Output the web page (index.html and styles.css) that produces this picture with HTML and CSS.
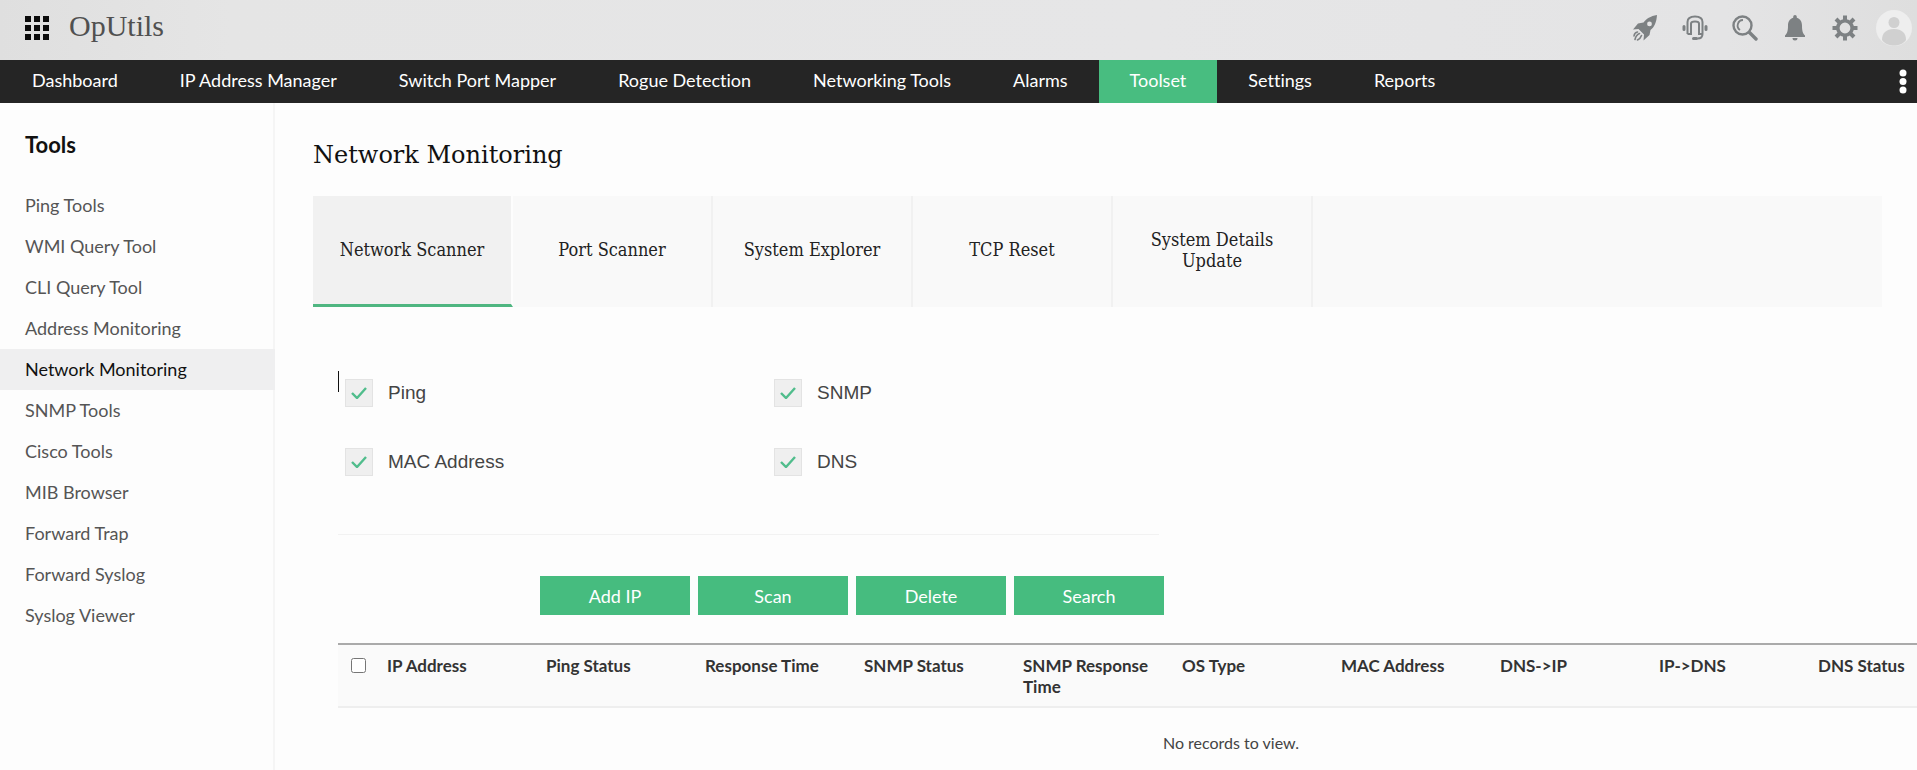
FILE: index.html
```html
<!DOCTYPE html>
<html lang="en">
<head>
<meta charset="utf-8">
<meta name="viewport" content="width=device-width, initial-scale=1">
<title>OpUtils - Network Monitoring</title>
<link rel="stylesheet" href="styles.css">
</head>
<body>
<header class="topbar">
  <button class="icon-btn apps" type="button" aria-label="Applications">
    <svg width="24" height="24" viewBox="0 0 24 24" fill="#0b0b0b"><path d="M0 0h6v6H0zM9 0h6v6H9zM18 0h6v6h-6zM0 9h6v6H0zM9 9h6v6H9zM18 9h6v6h-6zM0 18h6v6H0zM9 18h6v6H9zM18 18h6v6h-6z"/></svg>
  </button>
  <span class="brand">OpUtils</span>
  <div class="actions">
    <button class="icon-btn" type="button" aria-label="Quick start">
      <svg width="26" height="26" viewBox="0 0 26 26"><path fill="#7d8183" fill-rule="evenodd" d="M25 0C18.500 1 14 4 11.500 7.500L6 8.500 1 14.500l5.500-.5 5.500 5.500-.5 6 6-5.500 1-5C22.500 12 24.500 7 25 0zM17.500 6.500a2.400 2.400 0 1 1 0 4.800 2.400 2.400 0 0 1 0-4.800z"/><path fill="none" stroke="#7d8183" stroke-width="1.600" stroke-linecap="round" d="M5.500 17Q2.500 17.500 2 21M7.500 18.500Q4 20 3 24.500M9.500 20.500Q8.500 23.500 5.500 25"/></svg>
    </button>
    <button class="icon-btn" type="button" aria-label="Support">
      <svg width="26" height="26" viewBox="0 0 26 26" fill="none" stroke="#7d8183"><path stroke-width="2" d="M5.500 19V7C5.500 3.500 8 1.500 13 1.500S20.500 3.500 20.500 7v12M5.500 19h3.500V8.500c0-1.500 1-2 4-2s4 .5 4 2V19h3.500c0 3-1.500 4.500-5 4.500"/><path stroke-width="3" stroke-linecap="round" d="M2 11.500v3M24 11.500v3M11.500 23.500h3"/></svg>
    </button>
    <button class="icon-btn" type="button" aria-label="Search">
      <svg width="26" height="26" viewBox="0 0 26 26" fill="none" stroke="#7d8183"><circle cx="10.500" cy="10.500" r="9" stroke-width="2.400"/><path stroke-width="1.800" d="M11 5a5.500 5.500 0 0 0-3 10"/><path stroke-width="3.400" stroke-linecap="round" d="M17.500 17.500l6.500 6.500"/></svg>
    </button>
    <button class="icon-btn" type="button" aria-label="Notifications">
      <svg width="26" height="26" viewBox="0 0 26 26" fill="#7d8183"><path d="M13 0a1.800 1.800 0 0 1 1.800 1.800v1C18.500 3.800 20 7 20 10.500c0 5.500.8 8 3 10V22H3v-1.500c2.200-2 3-4.500 3-10C6 7 7.500 3.800 11.200 2.800v-1A1.800 1.800 0 0 1 13 0zM10.500 23h5a2.500 2.500 0 0 1-5 0z"/></svg>
    </button>
    <button class="icon-btn" type="button" aria-label="Settings">
      <svg width="26" height="26" viewBox="0 0 26 26" fill="none" stroke="#7d8183"><circle cx="13" cy="13" r="7.200" stroke-width="3.600"/><path stroke-width="4" d="M13 5V.5M13 21v4.500M5 13H.5M21 13h4.500M7.500 7.500L4 4M18.500 18.500L22 22M7.500 18.500L4 22M18.500 7.500L22 4"/></svg>
    </button>
    <button class="icon-btn avatar" type="button" aria-label="Account">
      <svg width="38" height="38" viewBox="0 0 38 38"><circle cx="19" cy="19" r="18" fill="#eee"/><circle cx="19" cy="13.500" r="5.500" fill="#d0d0d0"/><path fill="#d0d0d0" d="M7 31c0-7 4-11 12-11s12 4 12 11c-3 4-7 5.500-12 5.500S10 35 7 31z"/></svg>
    </button>
  </div>
</header>
<nav class="mainnav" aria-label="Main">
  <a href="#">Dashboard</a>
  <a href="#">IP Address Manager</a>
  <a href="#">Switch Port Mapper</a>
  <a href="#">Rogue Detection</a>
  <a href="#">Networking Tools</a>
  <a href="#">Alarms</a>
  <a href="#" class="active" aria-current="page">Toolset</a>
  <a href="#">Settings</a>
  <a href="#">Reports</a>
  <button class="icon-btn more" type="button" aria-label="More">
    <svg width="8" height="26" viewBox="0 0 8 26" fill="#fff"><circle cx="4" cy="4" r="3.500"/><circle cx="4" cy="12.500" r="3.500"/><circle cx="4" cy="21" r="3.500"/></svg>
  </button>
</nav>
<div class="layout">
  <aside class="sidebar">
    <h2>Tools</h2>
    <a href="#">Ping Tools</a>
    <a href="#">WMI Query Tool</a>
    <a href="#">CLI Query Tool</a>
    <a href="#">Address Monitoring</a>
    <a href="#" class="active" aria-current="page">Network Monitoring</a>
    <a href="#">SNMP Tools</a>
    <a href="#">Cisco Tools</a>
    <a href="#">MIB Browser</a>
    <a href="#">Forward Trap</a>
    <a href="#">Forward Syslog</a>
    <a href="#">Syslog Viewer</a>
  </aside>
  <main class="content">
    <h1>Network Monitoring</h1>
    <div class="tabs" role="tablist">
      <button type="button" role="tab" aria-selected="true" class="tab active">Network Scanner</button>
      <button type="button" role="tab" aria-selected="false" class="tab">Port Scanner</button>
      <button type="button" role="tab" aria-selected="false" class="tab">System Explorer</button>
      <button type="button" role="tab" aria-selected="false" class="tab">TCP Reset</button>
      <button type="button" role="tab" aria-selected="false" class="tab">System Details Update</button>
    </div>
    <div class="panel">
      <div class="options">
        <span class="caret"></span>
        <label><input type="checkbox" checked>Ping</label>
        <label><input type="checkbox" checked>SNMP</label>
        <label><input type="checkbox" checked>MAC Address</label>
        <label><input type="checkbox" checked>DNS</label>
      </div>
      <div class="buttons">
        <button type="button">Add IP</button>
        <button type="button">Scan</button>
        <button type="button">Delete</button>
        <button type="button">Search</button>
      </div>
      <div class="table-wrap">
        <table class="results">
          <thead>
            <tr>
              <th class="pick"><input type="checkbox" aria-label="Select all"></th>
              <th>IP Address</th>
              <th>Ping Status</th>
              <th>Response Time</th>
              <th>SNMP Status</th>
              <th>SNMP Response Time</th>
              <th>OS Type</th>
              <th>MAC Address</th>
              <th>DNS-&gt;IP</th>
              <th>IP-&gt;DNS</th>
              <th class="last">DNS Status</th>
            </tr>
          </thead>
          <tbody>
            <tr><td colspan="11">No records to view.</td></tr>
          </tbody>
        </table>
      </div>
    </div>
  </main>
</div>
</body>
</html>
```
FILE: styles.css
```css
* { box-sizing: border-box; }

body {
  margin: 0;
  min-height: 100vh;
  display: flex;
  flex-direction: column;
  background: #fdfdfd;
  color: #222;
  font-family: Lato, "Liberation Sans", sans-serif;
  font-size: 18px;
  font-variant-ligatures: none;
}

a { text-decoration: none; }

button {
  border: 0;
  padding: 0;
  background: none;
  font-family: inherit;
}

.icon-btn {
  display: flex;
  align-items: center;
  justify-content: center;
}

.topbar {
  display: flex;
  align-items: center;
  height: 60px;
  padding: 0 4px 4px 25px;
  background: linear-gradient(90deg, #dfdfdf, #e5e5e5 12%, #e6e6e7 60%, #e4e4e5 90%, #dedede);
}

.brand {
  margin-left: 20px;
  padding-bottom: 4px;
  color: #505050;
  font-family: "Liberation Serif", serif;
  font-size: 30px;
}

.actions {
  display: flex;
  align-items: center;
  margin-left: auto;
}

.actions .icon-btn { width: 50px; }

.actions .avatar {
  width: 38px;
  margin-left: 5px;
}

.mainnav {
  display: flex;
  height: 43px;
  padding: 0 10px 0 1px;
  background: #252525;
}

.mainnav a {
  padding: 0 31px;
  color: #fff;
  line-height: 40px;
  white-space: nowrap;
}

.mainnav .active { background: #48bd80; }

.more { margin-left: auto; }

.layout {
  display: flex;
  flex: 1;
}

.sidebar {
  flex: none;
  width: 275px;
  padding-top: 28px;
  border-right: 2px solid #f5f5f5;
}

.sidebar h2 {
  margin: 0 0 26px 25px;
  color: #111;
  font-size: 22px;
  line-height: 28px;
}

.sidebar a {
  display: block;
  margin-right: -2px;
  padding-left: 25px;
  color: #555;
  line-height: 41px;
}

.sidebar .active {
  background: #efeff0;
  color: #111;
}

.content {
  flex: 1;
  min-width: 0;
  padding: 36px 0 0 38px;
}

h1 {
  margin: 0 0 25px;
  color: #111;
  font-family: "DejaVu Serif", serif;
  font-size: 24px;
  font-weight: 400;
  line-height: 32px;
}

.tabs {
  display: flex;
  height: 111px;
  margin-right: 35px;
  background: #f9f9f9;
}

.tab {
  width: 200px;
  padding: 0 24px 4px;
  border-right: 2px solid #f1f1f1;
  color: #222;
  font-family: "DejaVu Serif Condensed", "DejaVu Serif", serif;
  font-size: 18px;
  line-height: 21px;
}

.tab.active {
  padding: 0 0 1px;
  border-right-color: #fdfdfd;
  border-bottom: 3px solid #4fb681;
  background: #f1f1f1 padding-box;
}

.panel { padding-left: 25px; }

.options {
  position: relative;
  display: grid;
  grid-template-columns: 429px 1fr;
  row-gap: 41px;
  width: 821px;
  padding: 72px 0 58px 7px;
  border-bottom: 1px solid #f2f2f2;
}

.options label {
  display: flex;
  align-items: center;
  gap: 15px;
  color: #444;
  font-family: "Liberation Sans", Arial, sans-serif;
  font-size: 19px;
  line-height: 28px;
}

.options input {
  appearance: none;
  width: 28px;
  height: 28px;
  margin: 0;
  border: 1px solid #e3e3e3;
  background: #efefef url("data:image/svg+xml,%3Csvg xmlns='http://www.w3.org/2000/svg' viewBox='0 0 16 12'%3E%3Cpath d='M1 6l5 5L15 1' fill='none' stroke='%2350bd8c' stroke-width='2.400'/%3E%3C/svg%3E") center / 16px 12px no-repeat;
}

.caret {
  position: absolute;
  top: 64px;
  left: 0;
  width: 1px;
  height: 21px;
  background: #111;
}

.buttons {
  display: flex;
  gap: 8px;
  padding: 41px 0 28px 202px;
}

.buttons button {
  width: 150px;
  height: 39px;
  background: #46bc7f;
  color: #fff;
  font-size: 18px;
}

.table-wrap { overflow: hidden; }

.results {
  width: 1786px;
  table-layout: fixed;
  border-collapse: collapse;
}

.results th {
  width: 159px;
  height: 63px;
  padding: 10px 20px 9px 0;
  border-top: 2px solid #aaa;
  border-bottom: 2px solid #eee;
  background: #fafafa;
  color: #333;
  font-size: 17px;
  line-height: 21px;
  text-align: left;
  vertical-align: top;
}

.results .pick {
  width: 49px;
  padding: 13px 0 0 13px;
}

.results .last { width: auto; }

.pick input {
  display: block;
  width: 15px;
  height: 15px;
  margin: 0;
}

.results td {
  padding: 25px 0;
  color: #444;
  font-size: 16px;
  line-height: 20px;
  text-align: center;
}
```
